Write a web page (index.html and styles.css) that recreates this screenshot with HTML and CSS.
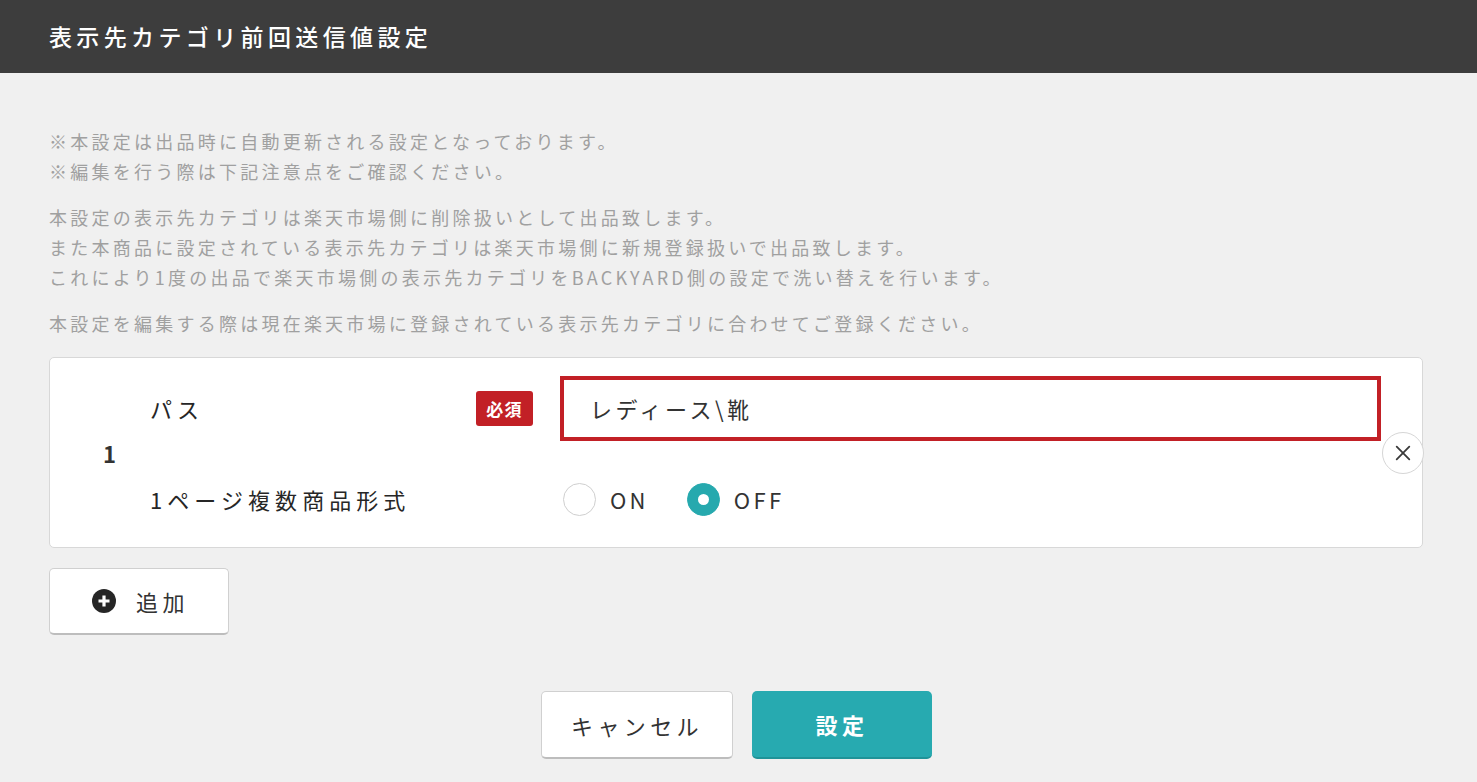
FILE: index.html
```html
<!DOCTYPE html>
<html lang="ja">
<head>
<meta charset="utf-8">
<title>表示先カテゴリ前回送信値設定</title>
<link rel="stylesheet" href="styles.css">
</head>
<body>
<div class="dialog">
  <header class="dialog-header">
    <h1 class="dialog-title">表示先カテゴリ前回送信値設定</h1>
  </header>

  <main class="dialog-body">
    <div class="notes">
      <p class="note">※本設定は出品時に自動更新される設定となっております。<br>※編集を行う際は下記注意点をご確認ください。</p>
      <p class="note">本設定の表示先カテゴリは楽天市場側に削除扱いとして出品致します。<br>また本商品に設定されている表示先カテゴリは楽天市場側に新規登録扱いで出品致します。<br>これにより1度の出品で楽天市場側の表示先カテゴリをBACKYARD側の設定で洗い替えを行います。</p>
      <p class="note">本設定を編集する際は現在楽天市場に登録されている表示先カテゴリに合わせてご登録ください。</p>
    </div>

    <section class="entry">
      <div class="entry-no">1</div>
      <div class="entry-fields">
        <div class="field field-path">
          <div class="field-label">パス</div>
          <div class="field-badge"><span class="badge-required">必須</span></div>
          <div class="field-control">
            <input class="text-input is-error" type="text" value="レディース\靴">
          </div>
        </div>
        <div class="field field-multi">
          <div class="field-label">1ページ複数商品形式</div>
          <div class="field-badge"></div>
          <div class="field-control radios">
            <label class="radio"><span class="radio-mark"></span><span class="radio-text">ON</span></label>
            <label class="radio is-checked"><span class="radio-mark"></span><span class="radio-text">OFF</span></label>
          </div>
        </div>
      </div>
      <button class="entry-remove" type="button" aria-label="削除">
        <svg viewBox="0 0 20 20" width="18" height="18"><path d="M3 3 L17 17 M17 3 L3 17" stroke="#3a3a3a" stroke-width="2" stroke-linecap="round" fill="none"/></svg>
      </button>
    </section>

    <div class="add-row">
      <button class="btn btn-add" type="button">
        <svg class="add-icon" viewBox="0 0 24 24" width="24" height="24"><circle cx="12" cy="12" r="12" fill="#262626"/><path d="M12 6.5 V17.5 M6.5 12 H17.5" stroke="#fff" stroke-width="3.2" fill="none"/></svg>
        <span>追加</span>
      </button>
    </div>

    <div class="actions">
      <button class="btn btn-cancel" type="button">キャンセル</button>
      <button class="btn btn-primary" type="button">設定</button>
    </div>
  </main>
</div>
</body>
</html>
```

FILE: styles.css
```css
* {
  box-sizing: border-box;
}

html, body {
  margin: 0;
  padding: 0;
}

body {
  background: #f0f0f0;
  font-family: "Noto Sans CJK JP", "Noto Sans", sans-serif;
  color: #333;
  width: 1477px;
  height: 782px;
  overflow: hidden;
}

.dialog-header {
  height: 73px;
  background: #3d3d3d;
  display: flex;
  align-items: center;
  padding-left: 49px;
}

.dialog-title {
  margin: 0;
  font-size: 23px;
  font-weight: 500;
  letter-spacing: 0.19em;
  color: #fff;
  line-height: 1;
}

.dialog-body {
  padding: 53px 54px 0 49px;
}

.notes {
  display: flex;
  flex-direction: column;
  gap: 16px;
}

.note {
  margin: 0;
  font-size: 18px;
  line-height: 30px;
  letter-spacing: 0.18em;
  color: #a0a0a0;
  white-space: nowrap;
}

/* one category entry */
.entry {
  position: relative;
  margin-top: 19px;
  height: 191px;
  background: #fff;
  border: 1px solid #d8d8d8;
  border-radius: 5px;
  display: flex;
  align-items: center;
}

.entry-no {
  width: 100px;
  padding-left: 53px;
  font-size: 22px;
  font-weight: 700;
  color: #333;
}

.entry-fields {
  flex: 1;
  padding-right: 41px;
  display: flex;
  flex-direction: column;
  gap: 28px;
}

/* label | badge | control */
.field {
  display: grid;
  grid-template-columns: 326px 84px 1fr;
  align-items: center;
}

.field-path {
  height: 65px;
}

.field-multi {
  height: 61px;
}

.field-label {
  font-size: 22px;
  font-weight: 400;
  letter-spacing: 0.23em;
  color: #262626;
  white-space: nowrap;
}

.badge-required {
  display: flex;
  align-items: center;
  justify-content: center;
  width: 57px;
  height: 35px;
  background: #c22026;
  color: #fff;
  font-size: 17px;
  font-weight: 700;
  letter-spacing: 0.08em;
  border-radius: 3px;
}

.text-input {
  width: 100%;
  height: 65px;
  border: 1px solid #ccc;
  padding: 0 26px;
  font-family: inherit;
  font-size: 22px;
  letter-spacing: 0.16em;
  color: #333;
  background: #fff;
  outline: none;
}

.text-input.is-error {
  border: 4px solid #c22026;
}

.radios {
  display: flex;
  align-items: center;
  padding-left: 3px;
  gap: 38px;
}

.radio {
  display: flex;
  align-items: center;
  gap: 14px;
}

.radio-mark {
  width: 33px;
  height: 33px;
  border-radius: 50%;
  border: 1px solid #cfcfcf;
  background: #fff;
  display: flex;
  align-items: center;
  justify-content: center;
}

.radio.is-checked .radio-mark {
  background: #26a9ae;
  border-color: #26a9ae;
}

.radio.is-checked .radio-mark::after {
  content: "";
  width: 11px;
  height: 11px;
  border-radius: 50%;
  background: #fff;
}

.radio-text {
  font-size: 22px;
  letter-spacing: 0.15em;
  color: #333;
}

/* remove button sits over the right edge of the entry */
.entry-remove {
  position: absolute;
  right: -2px;
  top: 50%;
  transform: translateY(-50%);
  width: 42px;
  height: 42px;
  border-radius: 50%;
  border: 1px solid #d6d6d6;
  background: #fff;
  padding: 0;
  display: flex;
  align-items: center;
  justify-content: center;
}

.btn {
  font-family: inherit;
  cursor: pointer;
  display: flex;
  align-items: center;
  justify-content: center;
  border-radius: 5px;
  font-size: 22px;
  letter-spacing: 0.2em;
}

.add-row {
  margin-top: 20px;
  display: flex;
}

.btn-add {
  width: 180px;
  height: 67px;
  justify-content: flex-start;
  padding-left: 42px;
  gap: 20px;
  background: #fff;
  border: 1px solid #d0d0d0;
  border-bottom: 2px solid #bdbdbd;
  color: #333;
}

.add-icon {
  flex: none;
}

.actions {
  margin-top: 56px;
  margin-left: -49px;
  margin-right: -54px;
  display: flex;
  justify-content: center;
  gap: 19px;
  padding-right: 4px;
}

.btn-cancel {
  width: 192px;
  height: 68px;
  background: #fff;
  border: 1px solid #d0d0d0;
  border-bottom: 2px solid #bdbdbd;
  color: #333;
}

.btn-primary {
  width: 180px;
  height: 68px;
  background: #27aab0;
  border: none;
  border-bottom: 2px solid #1f9398;
  color: #fff;
  font-weight: 700;
}
```
